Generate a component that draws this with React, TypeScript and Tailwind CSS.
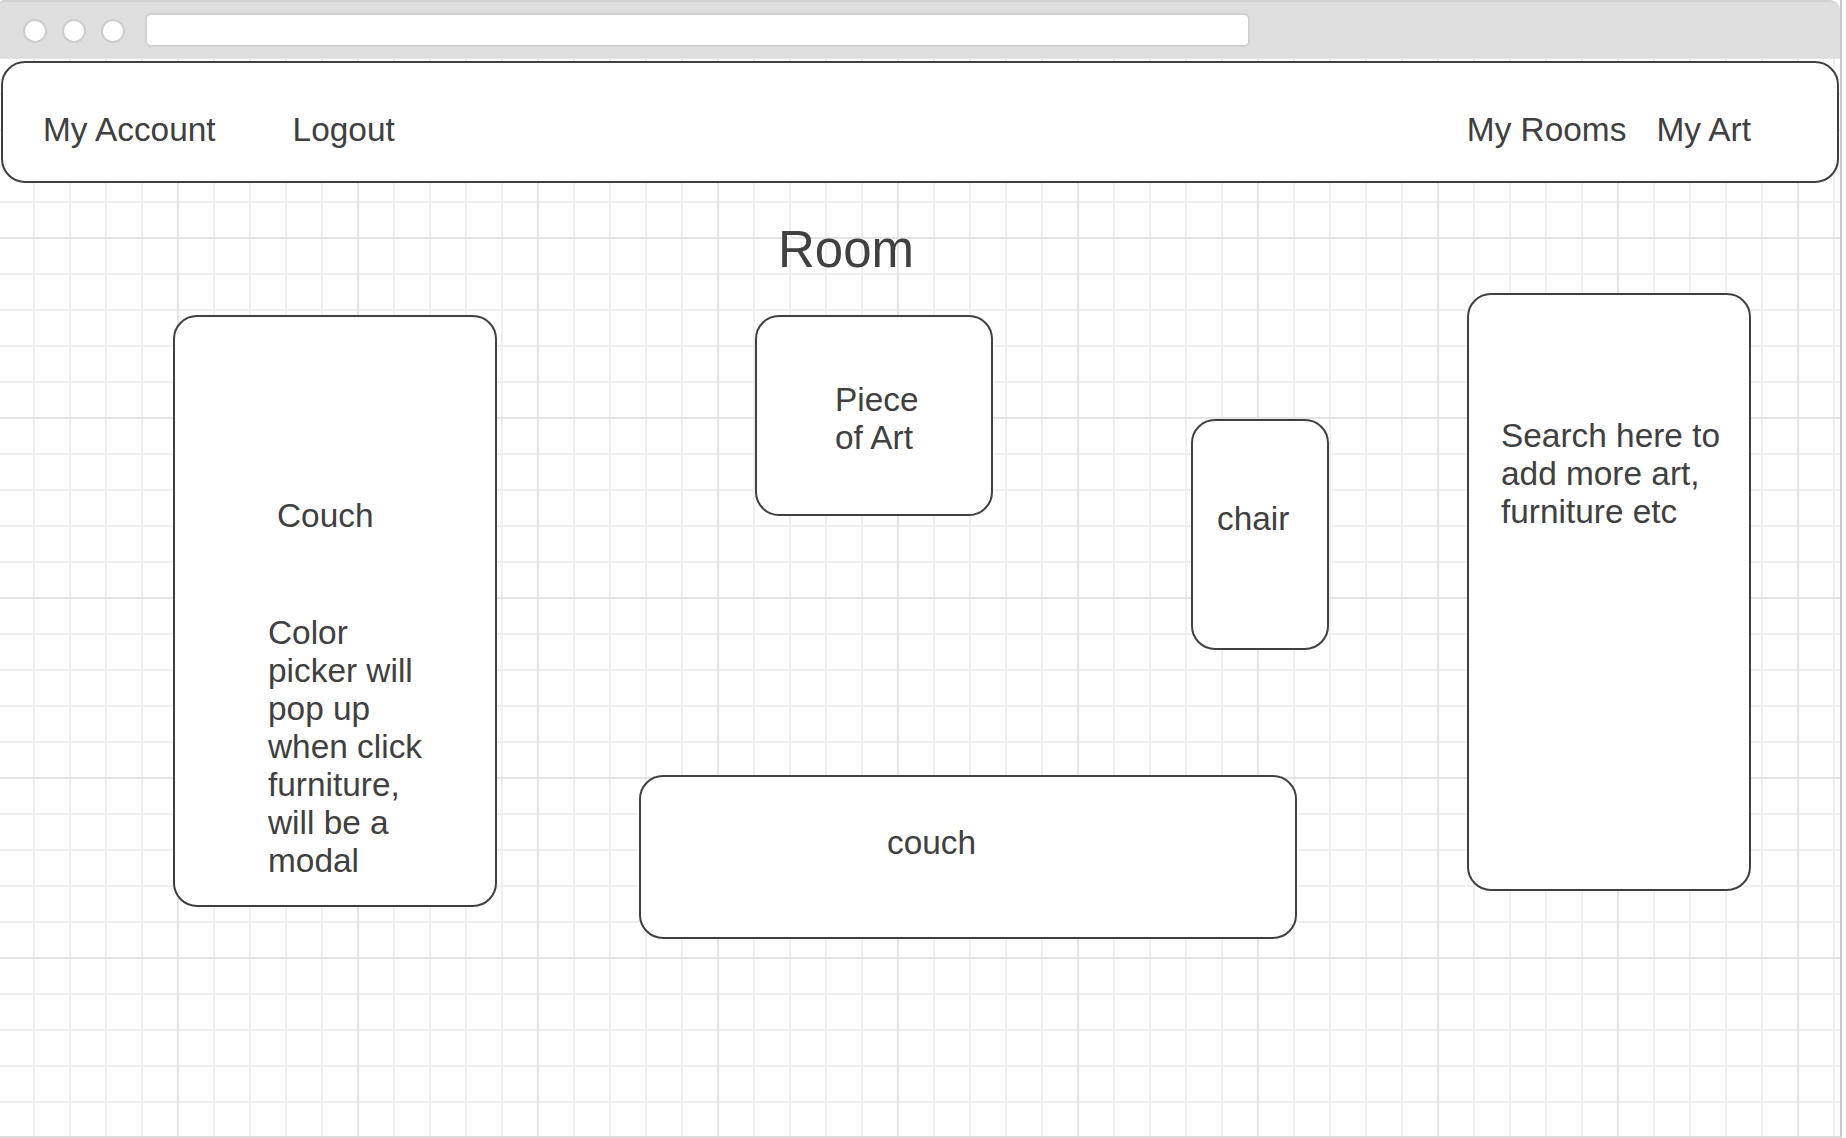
import React from "react";

export default function App() {
  const box = "shrink-0 bg-white border-2 border-[#404040] rounded-[24px]";
  return (
    <div className="w-[1846px] h-[1138px] bg-white overflow-hidden font-['Liberation_Sans',Arial,sans-serif] text-[#404040]">
      <div className="w-[1842px] h-[1138px] border-r-2 border-b-2 border-r-[#c9c9c9] border-b-[#dcdcdc] flex flex-col">
        {/* browser chrome */}
        <div className="h-[58px] shrink-0 bg-[#dedede] border-t-2 border-[#d2d2d2] rounded-tr-[10px] rounded-tl-[4px] flex items-start">
          <div className="flex items-start gap-[15px] ml-[23px] mt-[17px]">
            <div className="w-[24px] h-[24px] rounded-full bg-white border-2 border-[#cdcdcd]" />
            <div className="w-[24px] h-[24px] rounded-full bg-white border-2 border-[#cdcdcd]" />
            <div className="w-[24px] h-[24px] rounded-full bg-white border-2 border-[#cdcdcd]" />
          </div>
          <div className="ml-[20px] mt-[11px] w-[1105px] h-[34px] bg-white rounded-[6px] border-2 border-[#d0d0d0]" />
        </div>

        {/* grid canvas */}
        <div className="flex-1 flex flex-col bg-[linear-gradient(to_right,#e4e4e4_2px,transparent_2px),linear-gradient(to_bottom,#e4e4e4_2px,transparent_2px),linear-gradient(to_right,#efefef_2px,transparent_2px),linear-gradient(to_bottom,#efefef_2px,transparent_2px)] bg-size-[180px_180px,180px_180px,36px_36px,36px_36px] bg-position-[-3px_-1px]">
          {/* nav */}
          <nav className="mt-[3px] ml-[1px] w-[1838px] h-[122px] bg-white border-2 border-[#404040] rounded-[24px] flex items-start pt-[48px] pl-[40px] pr-[86px] text-[33.4px] leading-[38px]">
            <span>My Account</span>
            <span className="ml-[77px]">Logout</span>
            <span className="ml-auto">My Rooms</span>
            <span className="ml-[30px]">My Art</span>
          </nav>

          {/* title */}
          <h1 className="mt-[37px] ml-[778px] text-[51px] leading-[60px] font-normal">Room</h1>

          {/* furniture row */}
          <div className="mt-[13px] flex items-start text-[33.4px] leading-[38px]">
            <div className={`${box} ml-[173px] mt-[22px] w-[324px] h-[592px] flex flex-col pt-[180px]`}>
              <div className="pl-[102px]">Couch</div>
              <div className="pl-[93px] mt-[79px] w-[256px]">
                Color picker will pop up when click furniture, will be a modal
              </div>
            </div>

            <div className="ml-[142px] flex flex-col">
              <div className="flex items-start">
                <div className={`${box} ml-[116px] mt-[22px] w-[238px] h-[201px] pt-[64px] pl-[78px]`}>
                  <div className="w-[100px]">Piece of Art</div>
                </div>
                <div className={`${box} ml-[198px] mt-[126px] w-[138px] h-[231px] pt-[79px] pl-[24px]`}>
                  chair
                </div>
              </div>
              <div className={`${box} mt-[125px] w-[658px] h-[164px] pt-[47px] pl-[246px]`}>couch</div>
            </div>

            <div className={`${box} ml-[138px] w-[284px] h-[598px] pt-[122px] pl-[32px]`}>
              <div className="w-[232px]">Search here to add more art, furniture etc</div>
            </div>
          </div>
        </div>
      </div>
    </div>
  );
}
